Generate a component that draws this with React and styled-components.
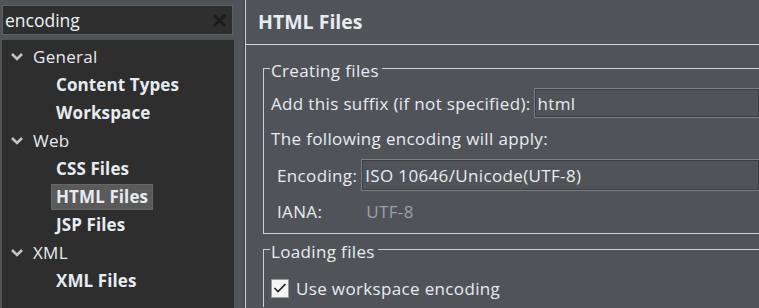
import React from "react";
import styled, { createGlobalStyle } from "styled-components";

const GlobalStyle = createGlobalStyle`
    html, body {
        margin: 0;
        padding: 0;
        background: #505458;
        overflow: hidden;
    }
    * {
        box-sizing: border-box;
    }
`;

const Page = styled.div`
    display: flex;
    width: 759px;
    height: 308px;
    font-family: "Open Sans", "Noto Sans", sans-serif;
    color: #e6ecf2;
`;

const Sidebar = styled.div`
    width: 244px;
    flex-shrink: 0;
    display: flex;
    flex-direction: column;
    padding: 5px 10px 0 2px;
    gap: 5px;
`;

const Search = styled.div`
    height: 30px;
    display: flex;
    align-items: center;
    justify-content: space-between;
    background: #2f2f2f;
    border: 1px solid #5d6164;
    padding: 0 5px 0 2px;
    margin-right: 1px;
`;

const SearchText = styled.span`
    font-size: 17.5px;
    color: #eef2f6;
`;

const Tree = styled.div`
    flex: 1;
    background: #2e2e2e;
    padding-top: 3px;
`;

const Row = styled.div`
    height: 28px;
    display: flex;
    align-items: center;
    padding-left: ${props => (props.child ? "49px" : "8px")};
`;

const Chevron = styled.svg`
    width: 14px;
    height: 10px;
    margin-right: 9px;
`;

const Label = styled.span`
    font-size: 17px;
    font-weight: ${props => (props.bold ? 700 : 400)};
    letter-spacing: ${props => (props.bold ? "0.1px" : "0.3px")};
    padding: 0 4px 1px;
    border: 1px solid ${props => (props.selected ? "#666" : "transparent")};
    background: ${props => (props.selected ? "#5a5a5a" : "transparent")};
    margin-left: ${props => (props.bold ? "0" : "-5px")};
`;

const Main = styled.div`
    flex: 1;
    display: flex;
    flex-direction: column;
    border-left: 1px solid #3e4144;
    box-shadow: inset 1px 0 0 #cfd2d4;
    min-width: 0;
`;

const Title = styled.div`
    height: 45px;
    flex-shrink: 0;
    display: flex;
    align-items: center;
    padding-left: 13px;
    font-size: 19.5px;
    font-weight: 700;
    border-bottom: 1px solid #d4d6d8;
    padding-bottom: 2px;
`;

const Body = styled.div`
    padding: 23px 0 0 18px;
    display: flex;
    flex-direction: column;
    gap: 15px;
    font-size: 17px;
    letter-spacing: 0.35px;
`;

const Group = styled.div`
    border-left: 1px solid #cfd2d4;
    border-bottom: ${props => (props.open ? "none" : "1px solid #cfd2d4")};
    padding-bottom: ${props => (props.open ? "0" : "2px")};
`;

const GroupHead = styled.div`
    display: flex;
    align-items: flex-start;
    height: 20px;

    &::before {
        content: "";
        width: 6px;
        border-top: 1px solid #cfd2d4;
    }
    &::after {
        content: "";
        flex: 1;
        border-top: 1px solid #cfd2d4;
    }
`;

const GroupLabel = styled.span`
    line-height: 20px;
    margin-top: -7px;
    padding: 0 3px 0 1px;
`;

const FieldRow = styled.div`
    display: flex;
    align-items: center;
    height: ${props => props.h || 30}px;
    padding-left: ${props => (props.indent ? "13px" : "7px")};
    white-space: nowrap;
`;

const Input = styled.div`
    flex: 1;
    height: ${props => props.h || 30}px;
    display: flex;
    align-items: center;
    margin-left: ${props => props.gap || 3}px;
    padding-left: 3px;
    border: 1px solid #7d8184;
    box-shadow: inset 0 0 0 1px #3b3e41;
    border-right: none;
`;

const Value = styled.span`
    color: ${props => (props.dim ? "#9da2a6" : "#e6ecf2")};
    margin-left: ${props => props.offset || 0}px;
`;

const CheckBox = styled.div`
    width: 18px;
    height: 19px;
    background: #f5f5f5;
    border: 1px solid #9a9a9a;
    display: flex;
    align-items: center;
    justify-content: center;
    margin-right: 7px;
`;

const chevron = (
    <Chevron viewBox="0 0 14 10">
        <path d="M2 2 L7 7 L12 2" fill="none" stroke="#c4c4c4" strokeWidth="2.6" />
    </Chevron>
);

export default () => (
    <Page>
        <GlobalStyle />
        <Sidebar>
            <Search>
                <SearchText>encoding</SearchText>
                <svg width="15" height="15" viewBox="0 0 15 15">
                    <path d="M2 2 L13 13 M13 2 L2 13" stroke="#1b1b1b" strokeWidth="2.8" />
                </svg>
            </Search>
            <Tree>
                <Row>{chevron}<Label>General</Label></Row>
                <Row child><Label bold>Content Types</Label></Row>
                <Row child><Label bold>Workspace</Label></Row>
                <Row>{chevron}<Label>Web</Label></Row>
                <Row child><Label bold>CSS Files</Label></Row>
                <Row child><Label bold selected>HTML Files</Label></Row>
                <Row child><Label bold>JSP Files</Label></Row>
                <Row>{chevron}<Label>XML</Label></Row>
                <Row child><Label bold>XML Files</Label></Row>
            </Tree>
        </Sidebar>
        <Main>
            <Title>HTML Files</Title>
            <Body>
                <Group>
                    <GroupHead><GroupLabel>Creating files</GroupLabel></GroupHead>
                    <FieldRow>
                        Add this suffix (if not specified):
                        <Input><Value>html</Value></Input>
                    </FieldRow>
                    <FieldRow h={41}>The following encoding will apply:</FieldRow>
                    <FieldRow indent h={32}>
                        Encoding:
                        <Input h={32} gap={4}><Value>ISO 10646/Unicode(UTF-8)</Value></Input>
                    </FieldRow>
                    <FieldRow indent h={40}>
                        IANA:
                        <Value dim offset={44}>UTF-8</Value>
                    </FieldRow>
                </Group>
                <Group open>
                    <GroupHead><GroupLabel>Loading files</GroupLabel></GroupHead>
                    <FieldRow h={38}>
                        <CheckBox>
                            <svg width="14" height="12" viewBox="0 0 14 12">
                                <path d="M1.5 6 L5 9.5 L12.5 2" fill="none" stroke="#1e1e1e" strokeWidth="1.6" />
                            </svg>
                        </CheckBox>
                        Use workspace encoding
                    </FieldRow>
                </Group>
            </Body>
        </Main>
    </Page>
);
